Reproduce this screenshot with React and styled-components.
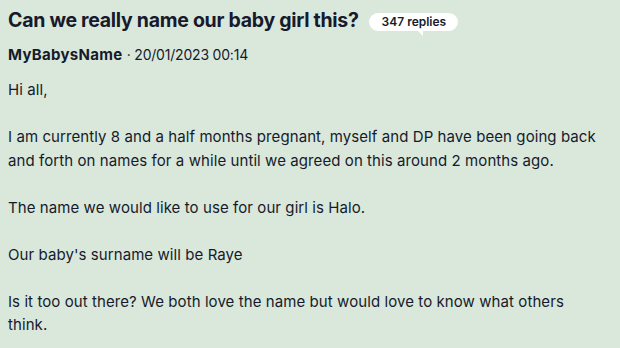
import React from 'react';
import styled, { createGlobalStyle } from 'styled-components';

const GlobalStyle = createGlobalStyle`
  body {
    margin: 0;
    background: #d9e8da;
    font-family: Inter, "Noto Sans", sans-serif;
    color: #161a2c;
  }
`;

const StyledThread = styled.div`
  padding: 6px 8px 0;
`;

const StyledHeader = styled.div`
  display: flex;
  align-items: center;
  gap: 10px;
`;

const StyledTitle = styled.h1`
  margin: 0;
  font-size: 19.5px;
  line-height: 28px;
  font-weight: 700;
  letter-spacing: -0.28px;
`;

const StyledBadge = styled.span`
  position: relative;
  background: #fff;
  border-radius: 9px;
  padding: 0 12px 0 13px;
  height: 18px;
  line-height: 18px;
  font-size: 12px;
  font-weight: 600;
  margin-top: 3px;

  &::after {
    content: '';
    position: absolute;
    left: 49px;
    bottom: -5px;
    border-left: 5px solid transparent;
    border-top: 5px solid #fff;
  }
`;

const StyledMeta = styled.p`
  margin: 11px 0 0;
  font-size: 15px;
  line-height: 20px;

  & strong {
    font-weight: 700;
    letter-spacing: 0.3px;
  }
  & span {
    font-size: 14px;
    letter-spacing: -0.2px;
  }
`;

const StyledBody = styled.div`
  max-width: 598px;
  margin-top: 13px;
  font-size: 15px;
  line-height: 23.5px;
  letter-spacing: 0.08px;

  & p {
    margin: 0 0 23.5px;
  }
`;

function App() {
  return (
    <>
      <GlobalStyle />
      <StyledThread>
        <StyledHeader>
          <StyledTitle>Can we really name our baby girl this?</StyledTitle>
          <StyledBadge>347 replies</StyledBadge>
        </StyledHeader>
        <StyledMeta>
          <strong>MyBabysName</strong> <span>· 20/01/2023 00:14</span>
        </StyledMeta>
        <StyledBody>
          <p>Hi all,</p>
          <p>
            I am currently 8 and a half months pregnant, myself and DP have been going back
            and forth on names for a while until we agreed on this around 2 months ago.
          </p>
          <p>The name we would like to use for our girl is Halo.</p>
          <p>Our baby's surname will be Raye</p>
          <p>
            Is it too out there? We both love the name but would love to know what others
            think.
          </p>
        </StyledBody>
      </StyledThread>
    </>
  );
}

export default App;
